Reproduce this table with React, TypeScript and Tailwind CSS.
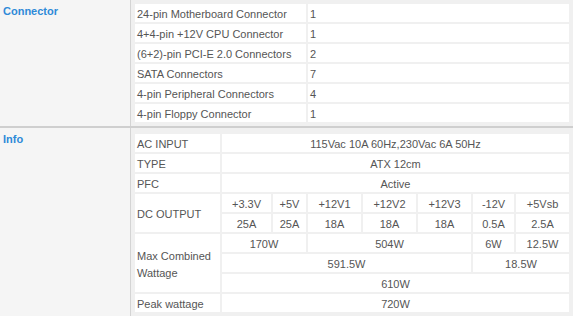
const connectors: [string, string][] = [
  ["24-pin Motherboard Connector", "1"],
  ["4+4-pin +12V CPU Connector", "1"],
  ["(6+2)-pin PCI-E 2.0 Connectors", "2"],
  ["SATA Connectors", "7"],
  ["4-pin Peripheral Connectors", "4"],
  ["4-pin Floppy Connector", "1"],
];

const rails = ["+3.3V", "+5V", "+12V1", "+12V2", "+12V3", "-12V", "+5Vsb"];
const amps = ["25A", "25A", "18A", "18A", "18A", "0.5A", "2.5A"];

const cell = "bg-white h-[18px] px-[2px] pt-[2px] pb-0 leading-[16px] align-middle";
const mid = `${cell} text-center`;

const SectionLabel = ({ children }: { children: string }) => (
  <div className="w-[131px] shrink-0 bg-[#f5f5f5] border-r border-[#d4d4d4] px-[3px] pt-[3px] text-[11px] font-bold text-[#2e8ad8]">
    {children}
  </div>
);

export default function App() {
  return (
    <div
      className="w-[573px] h-[316px] bg-[#f5f5f5] text-[11px] text-[#555]"
      style={{ fontFamily: '"Liberation Sans", Arial, sans-serif' }}
    >
      <div className="flex h-[126px]">
        <SectionLabel>Connector</SectionLabel>
        <div className="flex-1 bg-[#f0f0f0] p-[2px]">
          <table className="w-full table-fixed border-separate border-spacing-[2px]">
            <colgroup>
              <col className="w-[171px]" />
              <col />
            </colgroup>
            <tbody>
              {connectors.map(([name, count]) => (
                <tr key={name}>
                  <td className={cell}>{name}</td>
                  <td className={cell}>{count}</td>
                </tr>
              ))}
            </tbody>
          </table>
        </div>
      </div>

      <div className="h-[2px] bg-[#cfcfcf]" />

      <div className="flex h-[188px]">
        <SectionLabel>Info</SectionLabel>
        <div className="flex-1 bg-[#f0f0f0] pt-[4px] px-[2px] pb-[2px]">
          <table className="w-full table-fixed border-separate border-spacing-[2px]">
            <colgroup>
              <col className="w-[85px]" />
              <col className="w-[49px]" />
              <col className="w-[33px]" />
              <col className="w-[53px]" />
              <col className="w-[53px]" />
              <col className="w-[53px]" />
              <col className="w-[41px]" />
              <col />
            </colgroup>
            <tbody>
              <tr>
                <td className={cell}>AC INPUT</td>
                <td className={mid} colSpan={7}>
                  115Vac 10A 60Hz,230Vac 6A 50Hz
                </td>
              </tr>
              <tr>
                <td className={cell}>TYPE</td>
                <td className={mid} colSpan={7}>
                  ATX 12cm
                </td>
              </tr>
              <tr>
                <td className={cell}>PFC</td>
                <td className={mid} colSpan={7}>
                  Active
                </td>
              </tr>
              <tr>
                <td className={cell} rowSpan={2}>
                  DC OUTPUT
                </td>
                {rails.map((r) => (
                  <td key={r} className={mid}>
                    {r}
                  </td>
                ))}
              </tr>
              <tr>
                {amps.map((a, i) => (
                  <td key={i} className={mid}>
                    {a}
                  </td>
                ))}
              </tr>
              <tr>
                <td className="bg-white px-[2px] pt-[3px] leading-[17px] align-middle" rowSpan={3}>
                  Max Combined Wattage
                </td>
                <td className={mid} colSpan={2}>
                  170W
                </td>
                <td className={mid} colSpan={3}>
                  504W
                </td>
                <td className={mid}>6W</td>
                <td className={mid}>12.5W</td>
              </tr>
              <tr>
                <td className={mid} colSpan={5}>
                  591.5W
                </td>
                <td className={mid} colSpan={2}>
                  18.5W
                </td>
              </tr>
              <tr>
                <td className={mid} colSpan={7}>
                  610W
                </td>
              </tr>
              <tr>
                <td className={cell}>Peak wattage</td>
                <td className={mid} colSpan={7}>
                  720W
                </td>
              </tr>
            </tbody>
          </table>
        </div>
      </div>
    </div>
  );
}
